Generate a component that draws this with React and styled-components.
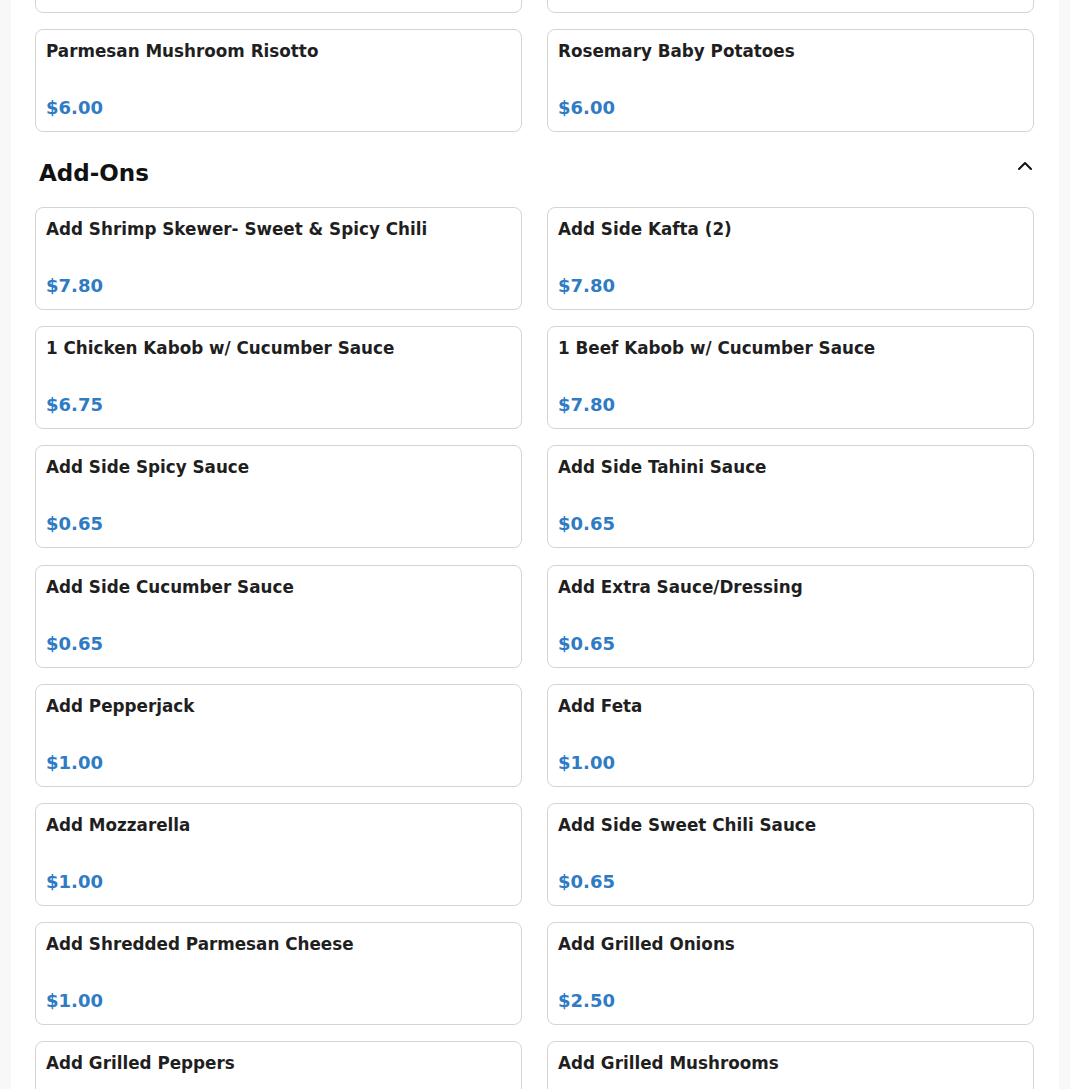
import React from "react";
import styled, { createGlobalStyle } from "styled-components";
import { ChevronUp } from "lucide-react";

const Global = createGlobalStyle`
  html, body { margin: 0; padding: 0; background: #f8f8f8; }
  body { font-family: "DejaVu Sans", "Noto Sans", sans-serif; color: #212529; }
  * { box-sizing: border-box; }
`;

const Page = styled.main`
  margin: 0 11px;
  background: #ffffff;
  padding: 0 25px 40px 24px;
  min-height: 1089px;
  overflow: hidden;
`;

const Section = styled.section`
  display: flex;
  flex-direction: column;
  margin-top: ${(p) => p.$offset || "0"};
`;

const SectionHeader = styled.div`
  display: flex;
  align-items: center;
  justify-content: space-between;
  padding: 23px 0 0 4px;
  height: 59px;
  margin-bottom: 16px;
`;

const SectionTitle = styled.h2`
  margin: 0;
  font-size: 23px;
  line-height: 36px;
  font-weight: 700;
  color: #111111;
`;

const Toggle = styled.button`
  border: 0;
  background: transparent;
  padding: 0;
  display: flex;
  align-items: center;
  justify-content: center;
  width: 24px;
  height: 24px;
  margin-top: -14px;
  margin-right: -3px;
  color: #111111;
  cursor: pointer;
`;

const Grid = styled.div`
  display: grid;
  grid-template-columns: 1fr 1fr;
  column-gap: 25px;
  row-gap: 16.15px;
`;

const Card = styled.div`
  display: flex;
  flex-direction: column;
  justify-content: space-between;
  min-height: 103px;
  padding: 9px 10px 10px 10px;
  border: 1px solid #d4d4d4;
  border-radius: 8px;
  background: #ffffff;
`;

const ItemName = styled.div`
  font-size: 16.8px;
  line-height: 24px;
  font-weight: 700;
  color: #1f1f1f;
`;

const Price = styled.div`
  font-size: 18px;
  line-height: 26px;
  font-weight: 700;
  color: #2f7bc4;
`;

const sides = [
  { name: "Seasoned Rice", price: "$6.00" },
  { name: "Garlic Green Beans", price: "$6.00" },
  { name: "Parmesan Mushroom Risotto", price: "$6.00" },
  { name: "Rosemary Baby Potatoes", price: "$6.00" },
];

const addOns = [
  { name: "Add Shrimp Skewer- Sweet & Spicy Chili", price: "$7.80" },
  { name: "Add Side Kafta (2)", price: "$7.80" },
  { name: "1 Chicken Kabob w/ Cucumber Sauce", price: "$6.75" },
  { name: "1 Beef Kabob w/ Cucumber Sauce", price: "$7.80" },
  { name: "Add Side Spicy Sauce", price: "$0.65" },
  { name: "Add Side Tahini Sauce", price: "$0.65" },
  { name: "Add Side Cucumber Sauce", price: "$0.65" },
  { name: "Add Extra Sauce/Dressing", price: "$0.65" },
  { name: "Add Pepperjack", price: "$1.00" },
  { name: "Add Feta", price: "$1.00" },
  { name: "Add Mozzarella", price: "$1.00" },
  { name: "Add Side Sweet Chili Sauce", price: "$0.65" },
  { name: "Add Shredded Parmesan Cheese", price: "$1.00" },
  { name: "Add Grilled Onions", price: "$2.50" },
  { name: "Add Grilled Peppers", price: "$2.50" },
  { name: "Add Grilled Mushrooms", price: "$2.50" },
];

function ItemCard({ item }) {
  return (
    <Card>
      <ItemName>{item.name}</ItemName>
      <Price>{item.price}</Price>
    </Card>
  );
}

export default function App() {
  return (
    <>
      <Global />
      <Page>
        <Section $offset="-90px">
          <Grid>
            {sides.map((it) => (
              <ItemCard key={it.name} item={it} />
            ))}
          </Grid>
        </Section>
        <Section>
          <SectionHeader>
            <SectionTitle>Add-Ons</SectionTitle>
            <Toggle aria-label="Collapse section">
              <ChevronUp size={24} strokeWidth={2} />
            </Toggle>
          </SectionHeader>
          <Grid>
            {addOns.map((it) => (
              <ItemCard key={it.name} item={it} />
            ))}
          </Grid>
        </Section>
      </Page>
    </>
  );
}
